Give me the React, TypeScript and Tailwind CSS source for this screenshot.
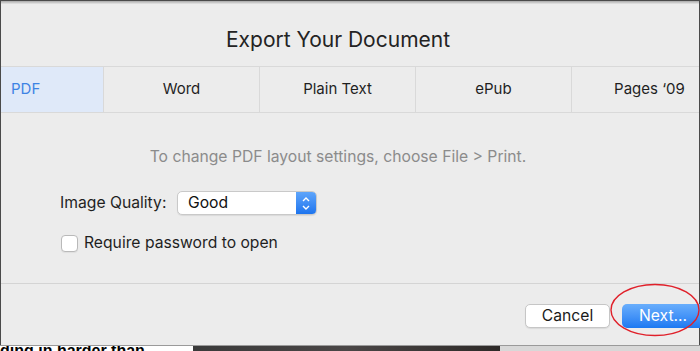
import React from "react";

const font = { fontFamily: "Inter, 'Liberation Sans', Arial, sans-serif" };

function Tab({ label, width, selected }: { label: string; width: string; selected?: boolean }) {
  return (
    <div
      className={`${width} h-full flex items-center shrink-0 border-r border-[#d9d9d9] ${selected ? "bg-[#dfe9f9] text-[#3d83e4] pl-[10px]" : "justify-center text-[#1f1f1f]"} text-[15px]`}
    >
      {label}
    </div>
  );
}

export default function App() {
  return (
    <div className="w-[700px] h-[351px] overflow-hidden bg-white relative" style={font}>
      <div className="h-[345px] bg-[#ececec] border-t border-l border-r border-[#4a4a4a] flex flex-col relative">
        <div className="h-[3px] bg-gradient-to-b from-[#a9a9a9] to-[#e6e6e6]" />
        <div className="h-[62px] flex items-center justify-center pr-[24px]">
          <span className="text-[21px] text-[#232323] mt-[10px]">Export Your Document</span>
        </div>
        <div className="h-[47px] flex border-t border-b border-[#d9d9d9] overflow-hidden">
          <Tab label="PDF" width="w-[103px]" selected />
          <Tab label="Word" width="w-[156px]" />
          <Tab label="Plain Text" width="w-[156px]" />
          <Tab label="ePub" width="w-[156px]" />
          <Tab label="Pages ‘09" width="w-[156px]" />
        </div>
        <div className="h-[56px] flex items-end justify-center pr-[24px]">
          <span className="text-[15.7px] text-[#8b8b8b]">To change PDF layout settings, choose File &gt; Print.</span>
        </div>
        <div className="flex items-center pl-[59px] mt-[22px] h-[24px]">
          <span className="text-[15.7px] text-[#1f1f1f] w-[117px]">Image Quality:</span>
          <div className="w-[140px] h-[24px] bg-white rounded-[5px] border border-[#c9c9c9] shadow-[0_1px_1px_rgba(0,0,0,0.08)] flex items-center overflow-hidden">
            <span className="flex-1 pl-[10px] text-[15.7px] text-[#111]">Good</span>
            <div className="w-[20px] h-full bg-gradient-to-b from-[#5ea5fb] to-[#1c74ee] flex flex-col items-center justify-center gap-[3px]">
              <svg width="8" height="5" viewBox="0 0 8 5"><path d="M1 4 L4 1 L7 4" stroke="white" strokeWidth="1.4" fill="none" /></svg>
              <svg width="8" height="5" viewBox="0 0 8 5"><path d="M1 1 L4 4 L7 1" stroke="white" strokeWidth="1.4" fill="none" /></svg>
            </div>
          </div>
        </div>
        <div className="flex items-center pl-[60px] mt-[19px] h-[18px]">
          <div className="w-[17px] h-[17px] bg-white border border-[#b9b9b9] rounded-[4px] shadow-[0_1px_1px_rgba(0,0,0,0.06)]" />
          <span className="text-[15.7px] text-[#1f1f1f] ml-[6px]">Require password to open</span>
        </div>
        <div className="mt-[31px] h-px bg-[#d4d4d4]" />
        <div className="flex items-center mt-[20px] h-[24px] pl-[524px]">
          <div className="w-[85px] h-[24px] bg-white border border-[#c6c6c6] rounded-[5px] shadow-[0_1px_1px_rgba(0,0,0,0.08)] flex items-center justify-center text-[15.7px] text-[#1a1a1a] shrink-0">
            Cancel
          </div>
          <div className="ml-[12px] w-[84px] h-[24px] rounded-[5px] bg-gradient-to-b from-[#69aefc] to-[#1b79f2] flex items-center justify-center text-[15.7px] text-white shrink-0 pr-[2px]">
            Next...
          </div>
        </div>
        <svg className="absolute left-[607px] top-[280px]" width="94" height="58" viewBox="0 0 94 58">
          <ellipse cx="47" cy="29" rx="44" ry="25.5" fill="none" stroke="#e0202a" strokeWidth="1.4" />
        </svg>
      </div>
      <div className="h-[6px] border-t border-[#9a9a9a] flex overflow-hidden">
        <div className="w-[193px] overflow-hidden relative">
          <span className="absolute left-[0px] top-[-3px] text-[16px] font-bold text-black leading-none whitespace-nowrap" style={{ fontFamily: "'Liberation Sans', Arial, sans-serif" }}>
            ding in harder than
          </span>
        </div>
        <div className="w-[307px] bg-gradient-to-r from-[#3a3a3a] via-[#4a4646] to-[#2e2a28]" />
        <div className="flex-1 bg-[#d8d8d8]" />
      </div>
    </div>
  );
}
